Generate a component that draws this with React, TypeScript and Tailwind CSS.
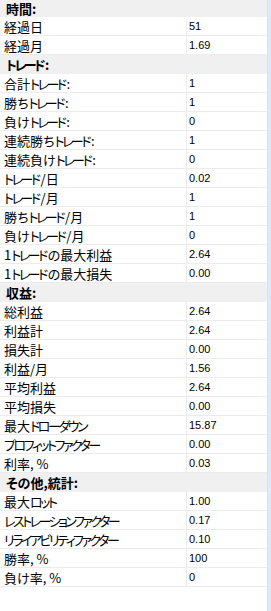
import React from 'react';

type Row = { label: string; value?: string; header?: boolean };

const ROWS: Row[] = [
  { label: '時間:', header: true },
  { label: '経過日', value: '51' },
  { label: '経過月', value: '1.69' },
  { label: 'トレード:', header: true },
  { label: '合計トレード:', value: '1' },
  { label: '勝ちトレード:', value: '1' },
  { label: '負けトレード:', value: '0' },
  { label: '連続勝ちトレード:', value: '1' },
  { label: '連続負けトレード:', value: '0' },
  { label: 'トレード/日', value: '0.02' },
  { label: 'トレード/月', value: '1' },
  { label: '勝ちトレード/月', value: '1' },
  { label: '負けトレード/月', value: '0' },
  { label: '1トレードの最大利益', value: '2.64' },
  { label: '1トレードの最大損失', value: '0.00' },
  { label: '収益:', header: true },
  { label: '総利益', value: '2.64' },
  { label: '利益計', value: '2.64' },
  { label: '損失計', value: '0.00' },
  { label: '利益/月', value: '1.56' },
  { label: '平均利益', value: '2.64' },
  { label: '平均損失', value: '0.00' },
  { label: '最大ドローダウン', value: '15.87' },
  { label: 'プロフィットファクター', value: '0.00' },
  { label: '利率, %', value: '0.03' },
  { label: 'その他,統計:', header: true },
  { label: '最大ロット', value: '1.00' },
  { label: 'レストレーションファクター', value: '0.17' },
  { label: 'リライアビリティファクター', value: '0.10' },
  { label: '勝率, %', value: '100' },
  { label: '負け率, %', value: '0' },
];

const jp = "[font-family:'Noto_Sans_CJK_JP',sans-serif] [font-feature-settings:'palt']";

// katakana runs are set tighter, as in the original UI font
function Label({ text }: { text: string }) {
  const parts = text.split(/([\u30A0-\u30FF]+)/);
  return (
    <>
      {parts.map((p, i) =>
        /[\u30A0-\u30FF]/.test(p) ? (
          <span key={i} className="tracking-[-2.5px] pr-[2px]">{p}</span>
        ) : (
          <span key={i}>{p}</span>
        )
      )}
    </>
  );
}

function App() {
  return (
    <div className="w-[271px] h-[611px] bg-white flex overflow-hidden text-black">
      <div className="flex-1 flex flex-col border-r border-[#e6e0e0]">
        {ROWS.map((row, i) =>
          row.header ? (
            <div
              key={i}
              className={`${i === 0 ? 'h-[17px]' : 'h-[19px]'} bg-[#f0f0f0] border-b border-[#f0f0f0] flex items-center pl-[6px] ${jp} text-[13px] font-bold leading-none whitespace-nowrap`}
            >
              <Label text={row.label} />
            </div>
          ) : (
            <div key={i} className="h-[19px] grid grid-cols-[187px_1fr] border-b border-[#ececec]">
              <div className={`flex items-center pl-[4px] border-r border-[#ececec] ${jp} text-[13px] leading-none whitespace-nowrap overflow-hidden`}>
                <Label text={row.label} />
              </div>
              <div className="flex items-center pl-[2px] [font-family:'Liberation_Sans',Arial,sans-serif] text-[11px] leading-none">
                {row.value}
              </div>
            </div>
          )
        )}
      </div>
      <div className="w-[3px] bg-[#dbe9f8]" />
    </div>
  );
}

export default App;
